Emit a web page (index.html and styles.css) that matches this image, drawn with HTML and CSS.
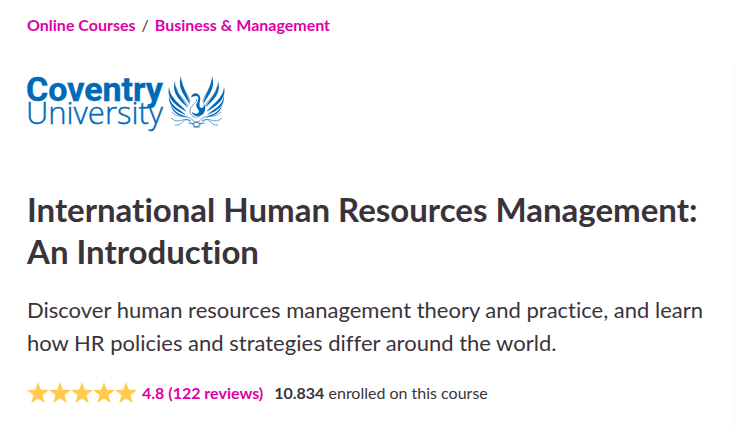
FILE: index.html
```html
<!DOCTYPE html>
<html lang="en">
<head>
<meta charset="utf-8">
<meta name="viewport" content="width=device-width, initial-scale=1">
<title>International Human Resources Management: An Introduction</title>
<link rel="stylesheet" href="styles.css">
</head>
<body>
<main class="course">
  <nav class="breadcrumb" aria-label="Breadcrumb">
    <a class="link" href="#">Online Courses</a>
    <span class="slash">/</span>
    <a class="link" href="#">Business &amp; Management</a>
  </nav>

  <svg class="logo" width="200" height="60" viewBox="0 0 200 60" role="img" aria-label="Coventry University">
    <text class="logo-top" x="-1" y="25">Coventry</text>
    <text class="logo-bottom" x="-1" y="48">University</text>
    <g class="phoenix">
      <g id="wing">
        <path class="feather" d="M154 0C154 11 161 17 163 29C158 19 150 13 154 0Z"/>
        <path class="feather" d="M148 5C148 17 156 22 161 32C154 25 144 18 148 5Z"/>
        <path class="feather" d="M142 11C143 23 153 27 159 36C151 30 139 24 142 11Z"/>
        <path class="feather" d="M142 20C144 31 153 33 159 39C151 36 141 31 142 20Z"/>
        <path class="feather" d="M144 29C148 38 155 38 161 42C154 40 145 38 144 29Z"/>
        <path d="M154 4C156 14 162 19 163 26M149 11C151 20 158 24 161 30M144 19C148 27 155 30 159 35"/>
        <path d="M145 36C151 43 157 38 163 42C168 46 172 49 178 47M144 42C151 49 158 40 164 45M148 49C156 50 155 42 161 44C167 48 167 52 173 51"/>
      </g>
      <use href="#wing" transform="translate(339 0) scale(-1 1)"/>
      <path class="bird" d="M164 21C165 18 168 16 171 18C176 22 171 27 173 31C174 33 177 32 177 28C180 34 177 40 171 40C167 40 165 38 165 36C168 39 172 38 172 35C170 31 168 30 170 27C172 23 172 20 169 20C167 20 166 21 164 21Z"/>
      <path d="M170 23C169 29 163 29 163 35C163 40 168 43 173 40M166 48C166 45 173 45 173 48C173 52 166 52 166 48Z"/>
    </g>
  </svg>

  <h1 class="title">International Human Resources Management: An Introduction</h1>
  <p class="summary">Discover human resources management theory and practice, and learn how HR policies and strategies differ around the world.</p>

  <div class="rating">
    <svg class="stars" width="110" height="22" viewBox="0 0 110 22" role="img" aria-label="4.8 out of 5 stars">
      <defs><path id="star" d="M11 0L13.800 7.800L22 8L15.500 13.100L17.800 21L11 16.400L4.200 21L6.500 13.100L0 8L8.200 7.800Z"/></defs>
      <use href="#star"/><use href="#star" x="22"/><use href="#star" x="44"/><use href="#star" x="66"/><use href="#star" x="88"/>
    </svg>
    <a class="link" href="#">4.8 (122 reviews)</a>
    <span class="enrolled"><strong>10.834</strong> enrolled on this course</span>
  </div>
</main>
<aside class="side"></aside>
</body>
</html>
```
FILE: styles.css
```css
* { box-sizing: border-box; }
body {
  margin: 0;
  background: #fff;
  color: #3a343a;
  font: 16px/24px Lato, sans-serif;
  font-variant-ligatures: none;
}
.course { padding: 13px 16px 24px 27px; }
.breadcrumb { display: flex; gap: 6px; }
.link { color: #de00a5; font-weight: 700; text-decoration: none; }
.link:hover { text-decoration: underline; }
.logo { display: block; margin-top: 39px; overflow: visible; }
.logo text { fill: #0069b8; }
.logo-top { font: 700 34px Roboto, sans-serif; stroke: #0069b8; stroke-width: 0.4; }
.logo-bottom { font: 300 31px "Open Sans", sans-serif; stroke: #0069b8; stroke-width: 0.4; }
.phoenix { fill: none; stroke: #0069b8; stroke-width: 0.6; }
.feather, .bird { fill: #0069b8; stroke: none; }
.title { margin: 52px 0 0; font-size: 33px; line-height: 42px; font-weight: 700; }
.summary { margin: 21px 0 0; padding-right: 8px; font-size: 22px; line-height: 33px; }
.rating { display: flex; align-items: center; margin-top: 22px; }
.stars { margin-right: 5px; fill: #ffca4f; }
.enrolled { margin-left: 11px; }
.side {
  position: absolute;
  top: 66px;
  bottom: 0;
  right: 0;
  width: 2px;
  background: #fafafa;
}
```
